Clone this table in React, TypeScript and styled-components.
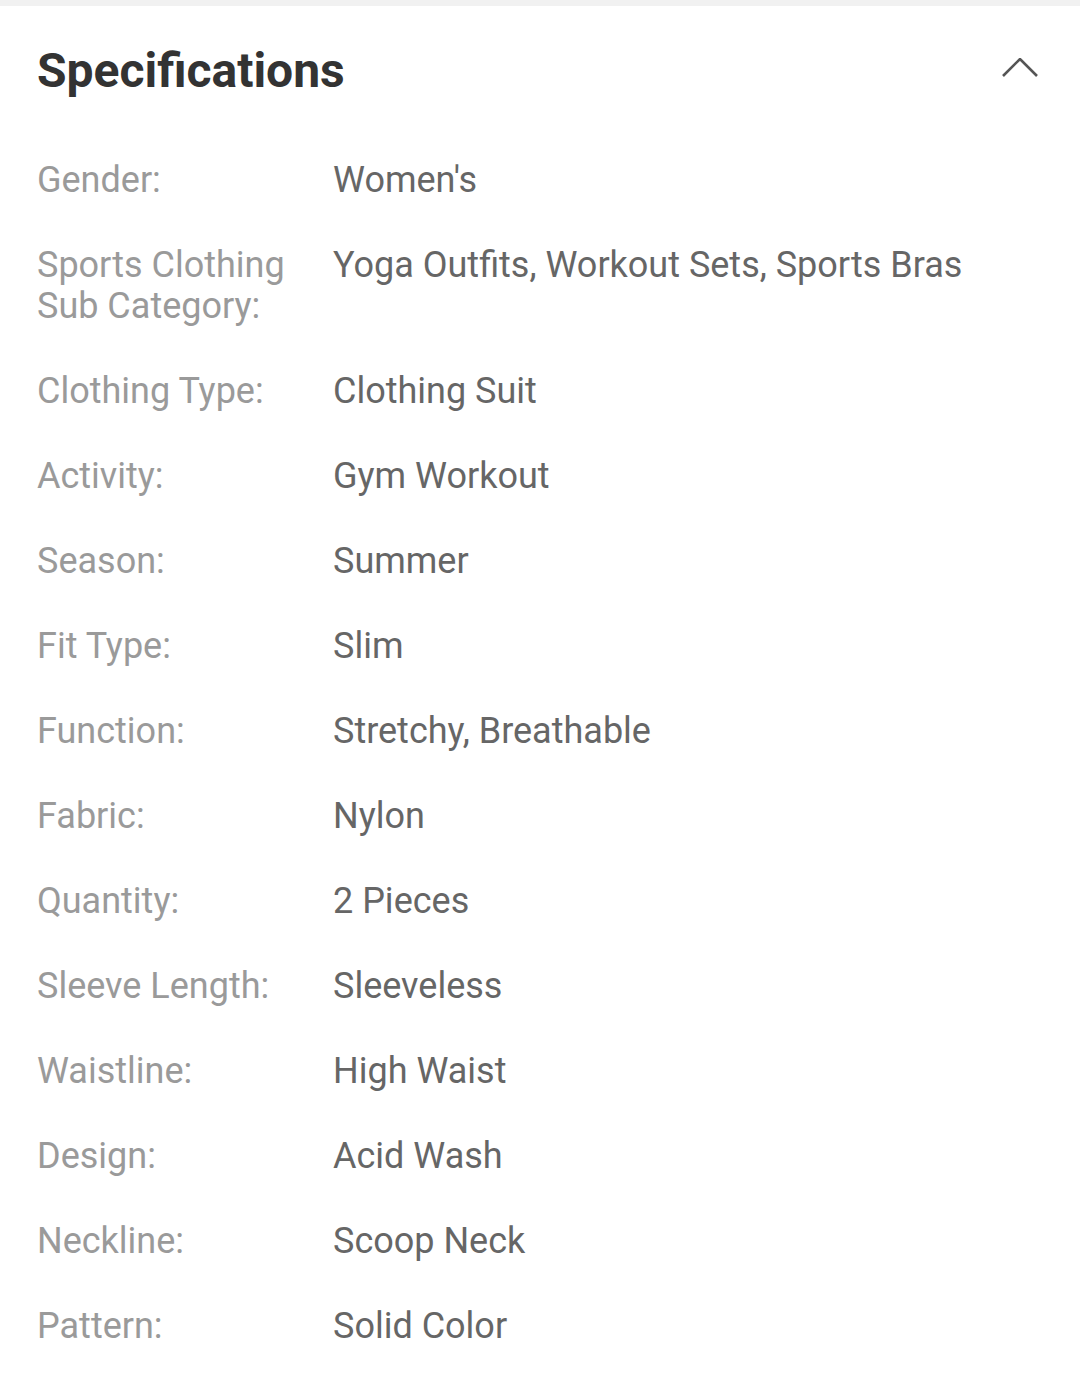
import React from "react";
import styled, { createGlobalStyle } from "styled-components";

const Global = createGlobalStyle`
  html, body { margin: 0; padding: 0; background: #fff; }
  body { font-family: Roboto, "Noto Sans", Arial, sans-serif; }
`;

const Page = styled.div`
  width: 1080px;
  min-height: 1391px;
  background: #fff;
`;

const TopBar = styled.div`
  height: 6px;
  background: #f1f1f1;
`;

const Header = styled.div`
  display: flex;
  align-items: center;
  justify-content: space-between;
  height: 132px;
  padding: 0 40px 4px 37px;
  box-sizing: border-box;
`;

const Title = styled.h2`
  margin: 0;
  font-family: Roboto, Arial, sans-serif;
  font-weight: 700;
  font-size: 48px;
  color: #333;
  letter-spacing: 0;
`;

const Chevron = styled.svg`
  width: 40px;
  height: 24px;
  display: block;
`;

const List = styled.div`
  display: flex;
  flex-direction: column;
  padding: 0 37px;
`;

const Row = styled.div`
  display: grid;
  grid-template-columns: 296px 1fr;
  padding: 22px 0;
  font-size: 36px;
  line-height: 41px;
`;

const Label = styled.div`
  color: #9a9a9a;
`;

const Value = styled.div`
  color: #666;
`;

const specs: [string, string][] = [
  ["Gender:", "Women's"],
  ["Sports Clothing Sub Category:", "Yoga Outfits, Workout Sets, Sports Bras"],
  ["Clothing Type:", "Clothing Suit"],
  ["Activity:", "Gym Workout"],
  ["Season:", "Summer"],
  ["Fit Type:", "Slim"],
  ["Function:", "Stretchy, Breathable"],
  ["Fabric:", "Nylon"],
  ["Quantity:", "2 Pieces"],
  ["Sleeve Length:", "Sleeveless"],
  ["Waistline:", "High Waist"],
  ["Design:", "Acid Wash"],
  ["Neckline:", "Scoop Neck"],
  ["Pattern:", "Solid Color"],
];

export default function App() {
  return (
    <Page>
      <Global />
      <TopBar />
      <Header>
        <Title>Specifications</Title>
        <Chevron viewBox="0 0 40 24">
          <polyline
            points="3,18 20,1 37,18"
            fill="none"
            stroke="#555"
            strokeWidth="2.6"
          />
        </Chevron>
      </Header>
      <List>
        {specs.map(([k, v]) => (
          <Row key={k}>
            <Label>{k}</Label>
            <Value>{v}</Value>
          </Row>
        ))}
      </List>
    </Page>
  );
}
